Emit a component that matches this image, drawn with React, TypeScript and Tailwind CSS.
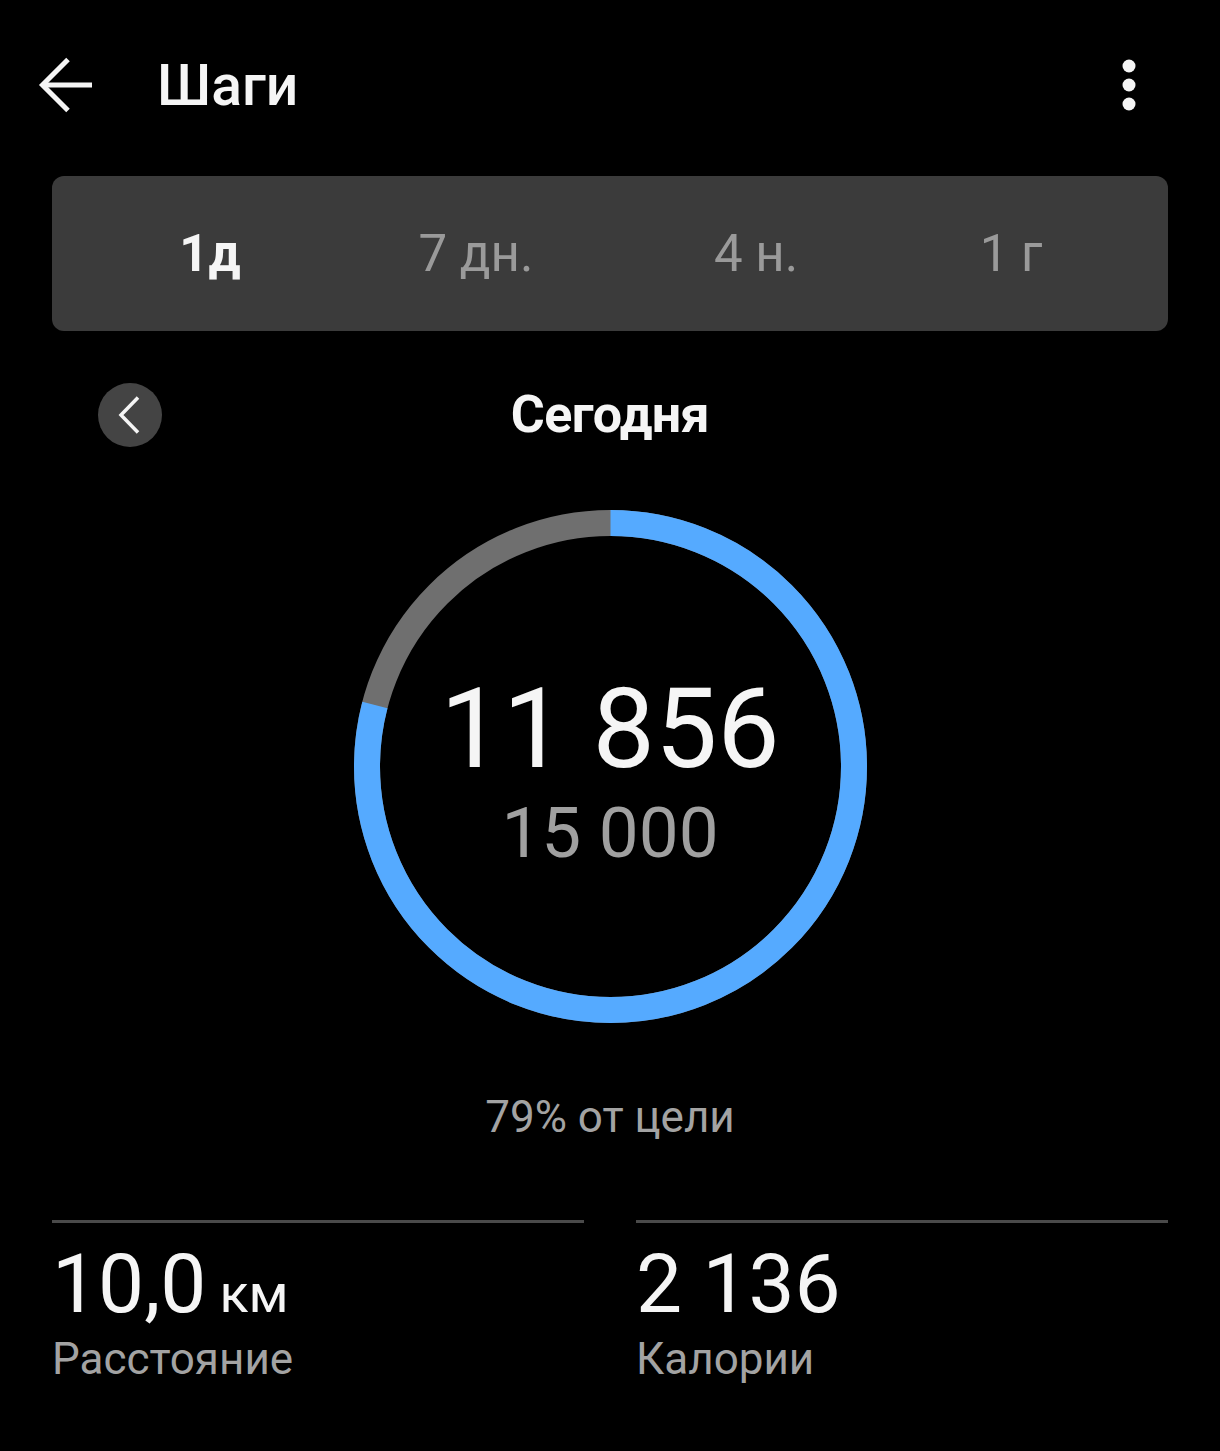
const font = "font-['Roboto','Noto_Sans',sans-serif]"

const tabs = [
  { label: "1д", active: true },
  { label: "7 дн.", active: false },
  { label: "4 н.", active: false },
  { label: "1 г", active: false },
]

function StepsRing({ value, goal }: { value: number; goal: number }) {
  const r = 243.5
  const c = 2 * Math.PI * r
  const pct = Math.min(value / goal, 1)
  return (
    <svg width="513" height="513" viewBox="0 0 513 513" className="[grid-area:1/1]">
      <circle cx="256.5" cy="256.5" r={r} fill="none" stroke="#6f6f6f" strokeWidth="26" />
      <circle
        cx="256.5"
        cy="256.5"
        r={r}
        fill="none"
        stroke="#55aaff"
        strokeWidth="26"
        strokeDasharray={`${c * pct} ${c}`}
        transform="rotate(-90 256.5 256.5)"
      />
    </svg>
  )
}

function Stat({ value, unit, label }: { value: string; unit?: string; label: string }) {
  return (
    <div className="flex flex-col">
      <div className="h-[3px] bg-[#4a4a4a]" />
      <div className="mt-[20px] flex items-baseline text-[#f5f5f5]">
        <span className="text-[82px] leading-[82px]">{value}</span>
        {unit && <span className="ml-[13px] text-[54px] leading-[54px]">{unit}</span>}
      </div>
      <div className="mt-[12px] text-[44px] leading-[44px] text-[#a3a3a3]">{label}</div>
    </div>
  )
}

export default function App() {
  return (
    <div className={`${font} w-[1220px] h-[1451px] bg-black text-white flex flex-col`}>
      {/* Header */}
      <div className="h-[170px] flex items-center pl-[38px] pr-[84px]">
        <svg width="56" height="56" viewBox="0 0 56 56" fill="none" stroke="#f5f5f5" strokeWidth="5">
          <path d="M54 28H5" />
          <path d="M30 2.5L4.5 28L30 53.5" />
        </svg>
        <h1 className="ml-[63px] text-[57px] leading-none font-medium text-[#f5f5f5]">Шаги</h1>
        <svg width="14" height="52" viewBox="0 0 14 52" className="ml-auto">
          <circle cx="7" cy="7" r="6.5" fill="#f5f5f5" />
          <circle cx="7" cy="26" r="6.5" fill="#f5f5f5" />
          <circle cx="7" cy="45" r="6.5" fill="#f5f5f5" />
        </svg>
      </div>

      {/* Period tabs */}
      <div className="mt-[6px] mx-[52px] h-[155px] rounded-[12px] bg-[#3b3b3b] pl-[24px] grid grid-cols-[268px_264px_296px_214px] items-center">
        {tabs.map((t) => (
          <div
            key={t.label}
            className={`text-center text-[51px] leading-none ${t.active ? "font-bold text-[#f5f5f5]" : "text-[#9a9a9a]"}`}
          >
            {t.label}
          </div>
        ))}
      </div>

      {/* Date row */}
      <div className="mt-[52px] mx-[98px] h-[64px] grid grid-cols-[64px_1fr_64px] items-center">
        <div className="w-[64px] h-[64px] rounded-full bg-[#444444] flex items-center justify-center">
          <svg width="24" height="40" viewBox="0 0 24 40" fill="none" stroke="#f5f5f5" strokeWidth="3.5">
            <path d="M20 2.5L3 20L20 37.5" />
          </svg>
        </div>
        <div className="text-center text-[52px] leading-none font-bold text-[#f5f5f5] tracking-[-0.5px]">Сегодня</div>
        <div />
      </div>

      {/* Ring */}
      <div className="mt-[63px] self-center grid">
        <StepsRing value={11856} goal={15000} />
        <div className="[grid-area:1/1] flex flex-col items-center justify-center pt-[8px]">
          <div className="text-[111px] leading-[111px] text-[#f5f5f5]">11 856</div>
          <div className="mt-[12px] text-[71px] leading-[71px] text-[#a0a0a0]">15 000</div>
        </div>
      </div>

      <div className="mt-[72px] text-center text-[44px] leading-[44px] text-[#a3a3a3]">79% от цели</div>

      {/* Stats */}
      <div className="mt-[81px] mx-[52px] grid grid-cols-2 gap-[52px]">
        <Stat value="10,0" unit="км" label="Расстояние" />
        <Stat value="2 136" label="Калории" />
      </div>
    </div>
  )
}
